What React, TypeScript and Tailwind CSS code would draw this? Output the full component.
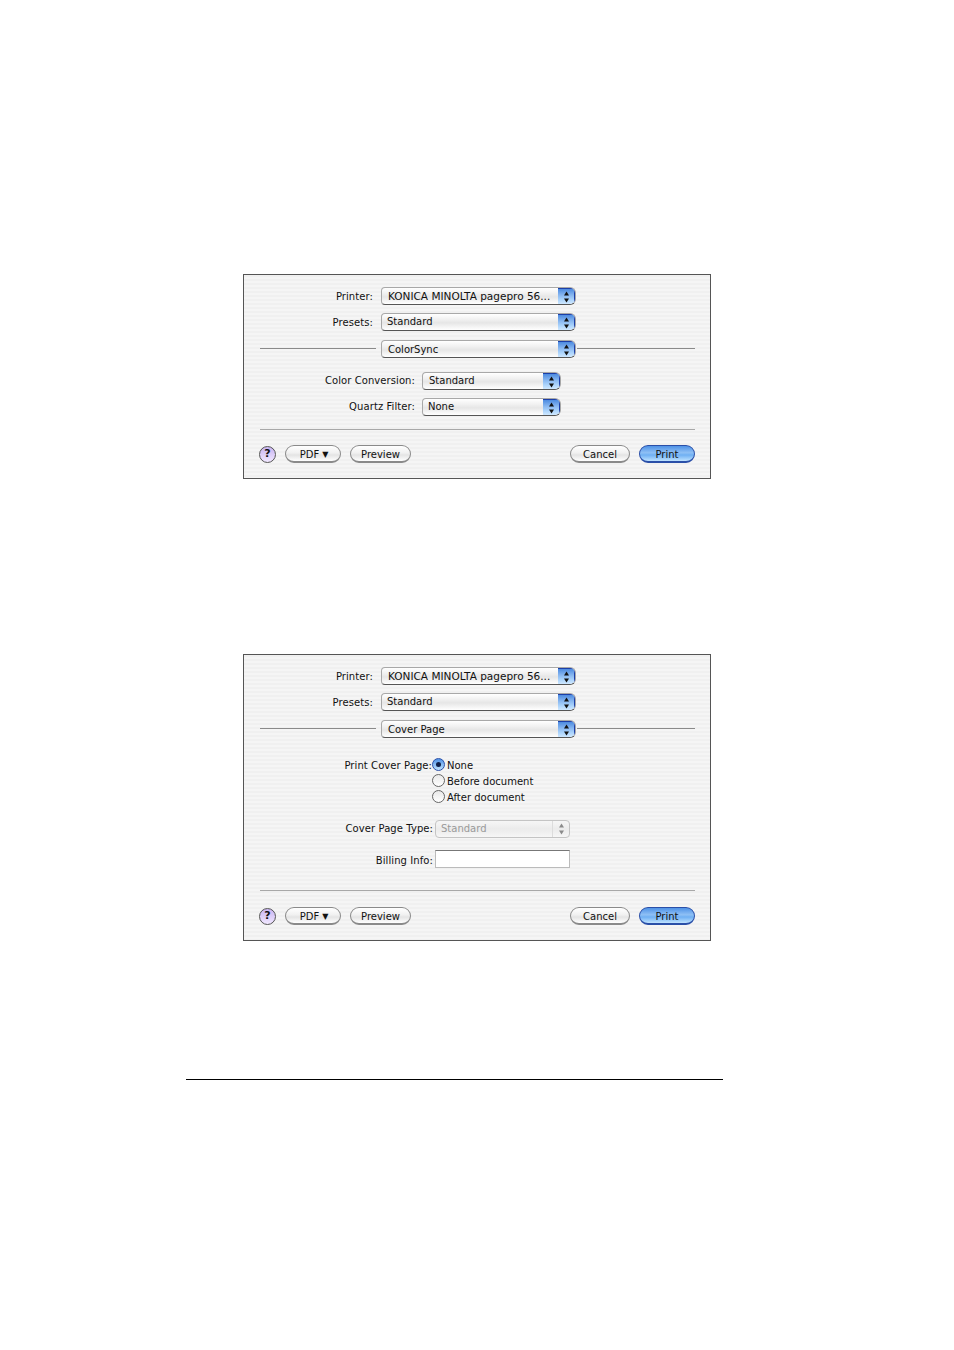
import React from 'react';

const stripes =
  'bg-[repeating-linear-gradient(180deg,#f0f0f0_0px,#f0f0f0_2px,#f5f5f5_2px,#f5f5f5_4px)]';

const Arrows = ({ color = '#111' }: { color?: string }) => (
  <svg width="7" height="12" viewBox="0 0 7 12">
    <path d="M3.5 0.5 L6 4.5 H1 Z" fill={color} />
    <path d="M3.5 11.5 L6 7.5 H1 Z" fill={color} />
  </svg>
);

const Select = ({
  text,
  width,
  textClass = 'pl-[6px] text-[10px] leading-[17px]',
}: {
  text: string;
  width: string;
  textClass?: string;
}) => (
  <div
    className={`${width} h-[18px] flex shrink-0 rounded-l-[4px] rounded-r-[6px] border border-[#a8a8a8] border-b-[#555] overflow-hidden bg-[linear-gradient(180deg,#ffffff_0%,#f0f0f0_35%,#e6e6e6_55%,#ffffff_100%)]`}
  >
    <div className={`flex-1 text-[#111] whitespace-nowrap overflow-hidden ${textClass}`}>{text}</div>
    <div className="w-[17px] flex items-center justify-center border-t border-r border-[#1c3fa8] bg-[linear-gradient(180deg,#4d8be0_0%,#8dbbf2_45%,#a9d2fb_70%,#cfe8ff_100%)]">
      <Arrows />
    </div>
  </div>
);

const DisabledSelect = ({ text }: { text: string }) => (
  <div className="w-[135px] h-[18px] flex shrink-0 rounded-[4px] border border-[#c4c4c4] bg-[linear-gradient(180deg,#f6f6f6_0%,#ebebeb_50%,#f6f6f6_100%)]">
    <div className="flex-1 pl-[5px] text-[10px] leading-[15px] text-[#9a9a9a]">{text}</div>
    <div className="w-[17px] flex items-center justify-center border-l border-[#dcdcdc]">
      <Arrows color="#8a8a8a" />
    </div>
  </div>
);

const Pill = ({ children, width, primary }: { children: React.ReactNode; width: string; primary?: boolean }) => (
  <div
    className={`${width} h-[18px] pt-[3px] rounded-full border border-b-2 flex items-center justify-center text-[10px] leading-none text-[#111] ${
      primary
        ? 'border-[#2a4fa8] bg-[linear-gradient(180deg,#4f92e6_0%,#8fc0f5_45%,#6fb0f3_60%,#bfe3ff_100%)]'
        : 'border-[#8a8a8a] bg-[linear-gradient(180deg,#ffffff_0%,#f1f1f1_45%,#e4e4e4_60%,#ffffff_100%)]'
    }`}
  >
    {children}
  </div>
);

const Footer = () => (
  <div className="flex items-center pl-[15px] pr-[15px]">
    <div className="w-[17px] h-[17px] rounded-full border border-[#555] flex items-center justify-center text-[11px] font-bold text-[#111] bg-[linear-gradient(180deg,#c9b4f2_0%,#f1e8ff_100%)]">
      ?
    </div>
    <div className="ml-[9px]">
      <Pill width="w-[56px]">
        <span className="ml-[2px]">PDF</span>
        <span className="ml-[3px] text-[8px]">▼</span>
      </Pill>
    </div>
    <div className="ml-[9px]">
      <Pill width="w-[61px]">Preview</Pill>
    </div>
    <div className="ml-auto">
      <Pill width="w-[60px]">Cancel</Pill>
    </div>
    <div className="ml-[9px]">
      <Pill width="w-[56px]" primary>
        Print
      </Pill>
    </div>
  </div>
);

const Label = ({ text, width, dy = 'pt-[1px]' }: { text: string; width: string; dy?: string }) => (
  <div
    className={`${width} ${dy} h-[18px] shrink-0 text-right text-[10px] leading-[18px] tracking-[0.08px] text-[#111] whitespace-nowrap`}
  >
    {text}
  </div>
);

const Row = ({ label, children, className = '' }: { label: string; children: React.ReactNode; className?: string }) => (
  <div className={`flex items-center gap-[8px] ${className}`}>
    <Label text={label} width="w-[129px]" />
    {children}
  </div>
);

const Header = ({ pane }: { pane: string }) => (
  <>
    <Row label="Printer:">
      <Select text="KONICA MINOLTA pagepro 56..." width="w-[195px]" textClass="pl-[6px] text-[10.5px] leading-[16px]" />
    </Row>
    <Row label="Presets:" className="mt-[8px]">
      <Select text="Standard" width="w-[195px]" textClass="pl-[5px] text-[10px] leading-[15px]" />
    </Row>
    <div className="flex items-center mt-[9px] pl-[16px] pr-[15px]">
      <div className="w-[116px] h-px bg-[#8a8a8a] mb-[2px]" />
      <div className="ml-[5px]">
        <Select text={pane} width="w-[195px]" />
      </div>
      <div className="flex-1 ml-[1px] h-px bg-[#8a8a8a] mb-[2px]" />
    </div>
  </>
);

const Radio = ({ label, checked }: { label: string; checked?: boolean }) => (
  <div className="flex items-center h-[16px]">
    <div
      className={`w-[13px] h-[13px] rounded-full border flex items-center justify-center ${
        checked
          ? 'border-[#2a4fa8] bg-[linear-gradient(180deg,#4f92e6_0%,#bfe3ff_100%)]'
          : 'border-[#666] bg-[linear-gradient(180deg,#e8e8e8_0%,#ffffff_100%)]'
      }`}
    >
      {checked && <div className="w-[5px] h-[5px] rounded-full bg-[#10204a]" />}
    </div>
    <span className="ml-[2px] pt-[4px] text-[10px] leading-[16px] text-[#111] whitespace-nowrap">{label}</span>
  </div>
);

const Divider = ({ className = '' }: { className?: string }) => (
  <div className={`ml-[16px] mr-[15px] h-px bg-[#a8a8a8] ${className}`} />
);

export default function App() {
  return (
    <div
      className="w-[954px] h-[1350px] bg-white pt-[274px]"
      style={{ fontFamily: '"DejaVu Sans", sans-serif' }}
    >
      <div className={`ml-[243px] w-[468px] h-[205px] border border-[#555] pt-[12px] ${stripes}`}>
        <Header pane="ColorSync" />
        <div className="flex items-center gap-[7px] mt-[14px]">
          <Label text="Color Conversion:" width="w-[171px]" dy="pt-0" />
          <Select text="Standard" width="w-[139px]" textClass="pl-[6px] text-[10px] leading-[15px]" />
        </div>
        <div className="flex items-center gap-[7px] mt-[8px]">
          <Label text="Quartz Filter:" width="w-[171px]" dy="pt-0" />
          <Select text="None" width="w-[139px]" textClass="pl-[5px] text-[10px] leading-[15px]" />
        </div>
        <Divider className="mt-[13px]" />
        <div className="mt-[15px]">
          <Footer />
        </div>
      </div>

      <div className={`ml-[243px] mt-[175px] w-[468px] h-[287px] border border-[#555] pt-[12px] ${stripes}`}>
        <Header pane="Cover Page" />
        <div className="flex mt-[18px]">
          <Label text="Print Cover Page:" width="w-[188px]" />
          <div className="flex flex-col">
            <Radio label="None" checked />
            <Radio label="Before document" />
            <Radio label="After document" />
          </div>
        </div>
        <div className="flex items-center gap-[2px] mt-[16px]">
          <Label text="Cover Page Type:" width="w-[189px]" dy="pt-0" />
          <DisabledSelect text="Standard" />
        </div>
        <div className="flex items-center gap-[2px] mt-[12px]">
          <Label text="Billing Info:" width="w-[189px]" dy="pt-[2px]" />
          <div className="w-[135px] h-[18px] bg-white border border-[#bbb] border-t-[#777]" />
        </div>
        <Divider className="mt-[22px]" />
        <div className="mt-[16px]">
          <Footer />
        </div>
      </div>

      <div className="ml-[186px] mt-[138px] w-[537px] h-px bg-black" />
    </div>
  );
}
